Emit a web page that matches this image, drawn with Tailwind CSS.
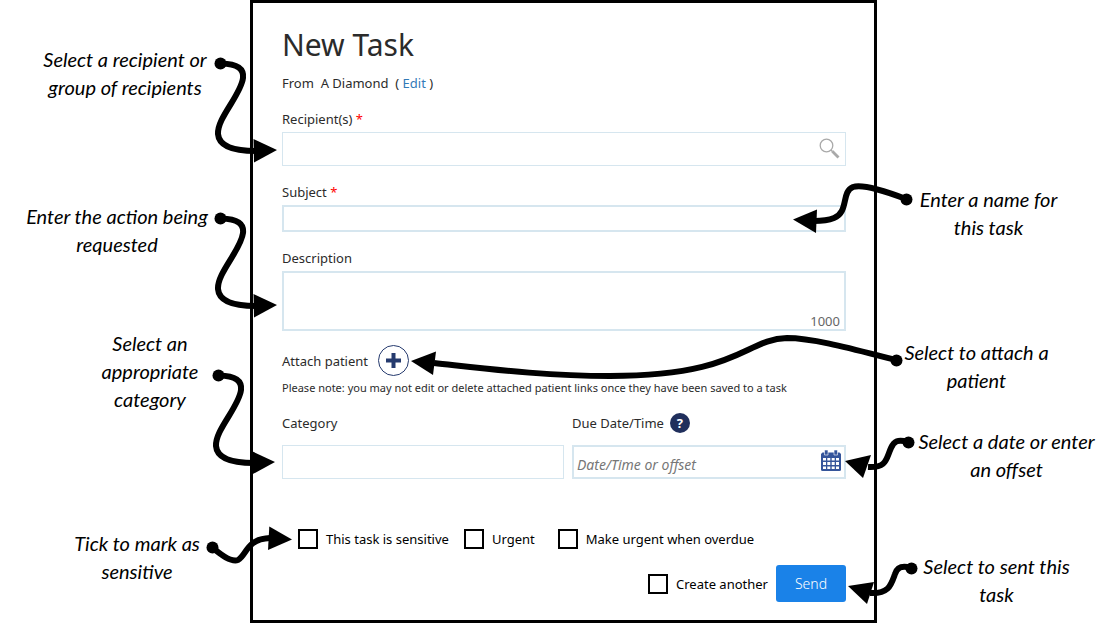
<!DOCTYPE html>
<html lang="en">

<head>
    <meta charset="UTF-8">
    <meta name="viewport" content="width=device-width, initial-scale=1.0">
    <title>New Task</title>
    <script src="https://cdn.jsdelivr.net/npm/@tailwindcss/browser@4"></script>
</head>

<body class="bg-white">
    <div class="flex justify-center font-['Noto_Sans','Open_Sans',sans-serif] text-[13px] leading-5 text-[#2b2b2b]">

        <!-- Left callouts -->
        <aside class="relative w-[250px] shrink-0 pt-[45px] text-center font-[Lato,sans-serif] text-xl leading-7 text-black italic">
            <p>Select a recipient or<br>group of recipients</p>
            <p class="mt-[101px] pr-4">Enter the action being<br>requested</p>
            <p class="mt-[71px] pl-[50px]">Select an<br>appropriate<br>category</p>
            <p class="mt-[116px] pl-6">Tick to mark as<br>sensitive</p>

            <svg class="pointer-events-none absolute top-0 left-0 overflow-visible" width="250" height="623" viewBox="0 0 250 623" aria-hidden="true">
                <defs>
                    <g id="bend">
                        <circle cx="220.5" cy="63.5" r="6" />
                        <path d="M221 63.500C238 64 244 69 243 78C241 95 217 118 218 134C219 147 234 151 256 151" fill="none" stroke="#000" stroke-width="6" />
                        <path d="M253.500 139L277 150L254 162.500Z" />
                    </g>
                </defs>
                <use href="#bend" />
                <use href="#bend" y="155" />
                <use href="#bend" x="-2" y="312" />
                <circle cx="212.5" cy="547.5" r="6" />
                <path d="M212 547C222 556 232 562 238 560C247 555 246 539 270 538" fill="none" stroke="#000" stroke-width="6" />
                <path d="M269.300 526.500L292 539.500L268 550Z" />
            </svg>
        </aside>

        <!-- Task form -->
        <form class="w-full max-w-[627px] border-3 border-black pt-6 pr-7 pb-[18px] pl-[29px]">
            <h1 class="text-[30px] leading-9">New Task</h1>
            <p class="mt-[10px]">From&nbsp; A Diamond&nbsp; ( <a href="#" class="text-[#337ab7]">Edit</a> )</p>

            <label for="recipients" class="mt-4 block">Recipient(s) <span class="text-[#f00]">*</span></label>
            <div class="mt-[3px] flex h-[34px] items-center border border-[#d6e6ef] pr-1">
                <input id="recipients" type="text" class="h-full min-w-0 flex-1 px-1 outline-none">
                <button type="button" aria-label="Search recipients">
                    <svg width="23" height="22" viewBox="0 0 23 22" fill="none" stroke="#a9a9a9">
                        <circle cx="8.500" cy="7.500" r="6.300" stroke-width="1.300" />
                        <path d="M13 12L14.500 13.500" stroke-width="1.500" />
                        <path d="M14.300 13.300L20.500 19.500" stroke-width="2.800" />
                    </svg>
                </button>
            </div>

            <label for="subject" class="mt-4 block">Subject <span class="text-[#f00]">*</span></label>
            <input id="subject" type="text" class="mt-[3px] block h-[27px] w-full border-2 border-[#d6e6ef] px-1 outline-none">

            <label for="description" class="mt-4 block">Description</label>
            <div class="mt-[3px] flex h-[60px] flex-col border-2 border-[#d6e6ef] px-1">
                <textarea id="description" maxlength="1000" class="min-h-0 flex-1 resize-none outline-none"></textarea>
                <span class="text-right leading-4 text-[#666]">1000</span>
            </div>

            <div class="mt-[14px] flex items-center gap-[10px]">
                <label for="attach">Attach patient</label>
                <button id="attach" type="button" class="flex size-[31px] items-center justify-center rounded-full border border-[#253a6e]">
                    <svg width="15" height="15" viewBox="0 0 15 15" stroke="#253a6e" stroke-width="4">
                        <path d="M7.500 0V15M0 7.500H15" />
                    </svg>
                </button>
            </div>
            <p class="mt-[2px] text-[11px]">Please note: you may not edit or delete attached patient links once they have been saved to a task</p>

            <div class="mt-[15px] grid grid-cols-[282fr_274fr] gap-x-2 gap-y-3">
                <label for="category">Category</label>
                <div class="flex h-5 items-center gap-[6px]">
                    <label for="due">Due Date/Time</label>
                    <button type="button" aria-label="Help" class="size-5 rounded-full bg-[#202f5c] text-center font-bold text-white">?</button>
                </div>
                <select id="category" class="h-[34px] w-full appearance-none border border-[#d6e6ef] px-1 outline-none">
                    <option></option>
                </select>
                <div class="flex h-[34px] items-center border-2 border-[#d6e6ef] pr-[3px]">
                    <input id="due" type="text" placeholder="Date/Time or offset" class="h-full min-w-0 flex-1 px-[3px] pt-1 text-sm italic outline-none placeholder:text-[#777]">
                    <button type="button" aria-label="Open calendar">
                        <svg class="mb-1" width="20" height="21" viewBox="0 0 20 21">
                            <path d="M1.500 2.500H18.500L20 4V19.500Q20 21 18.500 21H1.500Q0 21 0 19.500V4Z" fill="#35559b" />
                            <path d="M3.500 0H7V5H3.500ZM13 0H16.500V5H13Z" fill="#35559b" stroke="#fff" stroke-width=".6" />
                            <path d="M2 8H5V10.500H2ZM6.300 8H9.300V10.500H6.300ZM10.700 8H13.700V10.500H10.700ZM15 8H18V10.500H15ZM2 12H5V15H2ZM6.300 12H9.300V15H6.300ZM10.700 12H13.700V15H10.700ZM15 12H18V15H15ZM2 16.500H5V19H2ZM6.300 16.500H9.300V19H6.300ZM10.700 16.500H13.700V19H10.700ZM15 16.500H18V19H15Z" fill="#fff" />
                        </svg>
                    </button>
                </div>
            </div>

            <!-- Options -->
            <div class="mt-[50px] flex pl-4 text-black">
                <label class="mr-[15px] flex items-center gap-2"><input type="checkbox" class="size-5 appearance-none border-2 border-black checked:bg-black">This task is sensitive</label>
                <label class="mr-[23px] flex items-center gap-2"><input type="checkbox" class="size-5 appearance-none border-2 border-black checked:bg-black">Urgent</label>
                <label class="flex items-center gap-2"><input type="checkbox" class="size-5 appearance-none border-2 border-black checked:bg-black">Make urgent when overdue</label>
            </div>
            <div class="mt-4 flex items-center justify-end gap-2 text-black">
                <label class="flex items-center gap-2"><input type="checkbox" class="size-5 appearance-none border-2 border-black checked:bg-black">Create another</label>
                <button type="submit" class="h-[37px] w-[70px] rounded-[3px] bg-[#1a82e8] text-sm font-light text-white">Send</button>
            </div>
        </form>

        <!-- Right callouts -->
        <aside class="relative w-[239px] shrink-0 pt-[185px] text-center font-[Lato,sans-serif] text-xl leading-7 text-black italic">
            <p class="pr-4">Enter a name for<br>this task</p>
            <p class="mt-[97px] pr-10">Select to attach a<br>patient</p>
            <p class="mt-[33px] pl-5">Select a date or enter<br>an offset</p>
            <p class="mt-[69px]">Select to sent this<br>task</p>

            <svg class="pointer-events-none absolute top-0 left-0 overflow-visible" width="239" height="623" viewBox="877 0 239 623" aria-hidden="true">
                <g fill="none" stroke="#000" stroke-width="6">
                    <path d="M906 199C885 191 862 184 853 187C841 192 849 212 834 218C829 220 822 221 814 221" />
                    <path d="M896 360C860 351 815 338 787 338C745 339 740 376 610 376C545 376 490 369 434 363" />
                    <path d="M908 442C898 439 894 441 891 448C886 459 887 468 868 467" />
                    <path d="M911 568C901 565 897 568 895 574C891 585 889 594 870 593" />
                </g>
                <circle cx="906.5" cy="199.5" r="6" />
                <circle cx="896.5" cy="360.5" r="6" />
                <circle cx="908.5" cy="442.5" r="6" />
                <circle cx="911.5" cy="568.5" r="6" />
                <path d="M793 219.500L817 209.500L816 233Z" />
                <path d="M411 361L436 351.500L433 375Z" />
                <path d="M845 461L871 455L863 478Z" />
                <path d="M848 586L874 582L867 604Z" />
            </svg>
        </aside>
    </div>
</body>

</html>
